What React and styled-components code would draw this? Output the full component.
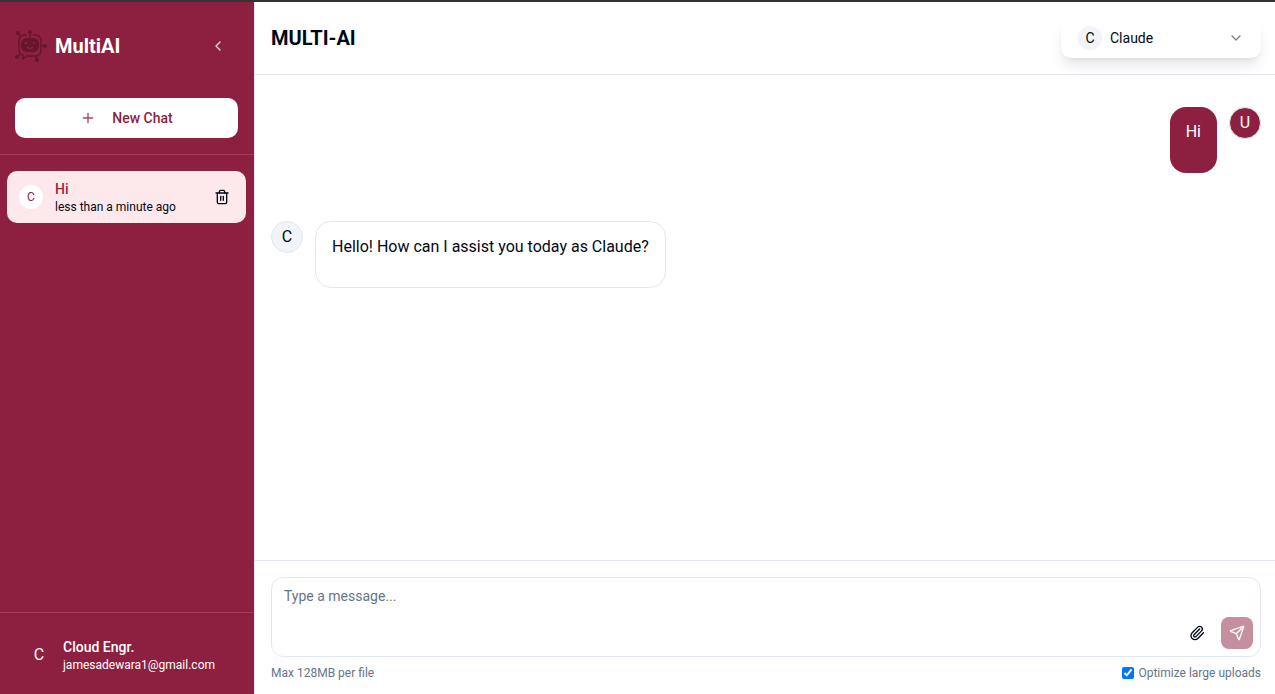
import React from 'react';
import styled, { createGlobalStyle } from 'styled-components';
import { ChevronDown, ChevronLeft, Paperclip, Plus, Send, Trash2 } from 'lucide-react';

const BRAND = '#8d1f40';
const LINE = '#e2e8f0';
const INK = '#020817';
const MUTED = '#64748b';

const GlobalStyle = createGlobalStyle`
  *, *::before, *::after { box-sizing: border-box; }
  body {
    margin: 0;
    color: ${INK};
    background: #fff;
    font: 16px/24px Roboto, sans-serif;
  }
  button, select, textarea, input { font: inherit; color: inherit; }
  h1, h2, p, ul { margin: 0; padding: 0; }
`;

const Page = styled.div`
  display: flex;
  min-height: 100vh;
  border-top: 2px solid #343338;
`;

const Sidebar = styled.aside`
  display: flex;
  flex-direction: column;
  flex: none;
  width: 255px;
  color: #fff;
  background: ${BRAND};
  border-right: 1px solid ${LINE};
`;

const SidebarTop = styled.div`
  display: flex;
  flex-direction: column;
  gap: 24px;
  padding: 16px 16px 16px 15px;
  border-bottom: 1px solid #a63c5a;
`;

const BrandRow = styled.div`
  display: flex;
  align-items: center;
  gap: 8px;
  height: 56px;
`;

const BrandName = styled.h1`
  flex: 1;
  font-size: 20px;
  line-height: 28px;
  font-weight: 700;
`;

const IconButton = styled.button`
  display: grid;
  place-items: center;
  width: ${(p) => p.$size}px;
  height: ${(p) => p.$size}px;
  padding: 0;
  border: 0;
  border-radius: 8px;
  color: ${(p) => p.$color || 'inherit'};
  background: ${(p) => p.$fill || 'transparent'};
`;

const NewChatButton = styled.button`
  display: flex;
  align-items: center;
  justify-content: center;
  gap: 16px;
  height: 40px;
  padding: 0 16px;
  border: 0;
  border-radius: 10px;
  background: #fff;
  color: ${BRAND};
  font-size: 14px;
  line-height: 20px;
  font-weight: 500;

  svg { opacity: 0.8; }
`;

const ChatList = styled.ul`
  flex: 1;
  padding: 16px 8px 16px 7px;
  list-style: none;
`;

const ChatItem = styled.li`
  display: flex;
  align-items: center;
  gap: 12px;
  height: 52px;
  padding: 0 12px;
  border-radius: 10px;
  color: ${INK};
  background: #fde8ec;
`;

const Avatar = styled.span`
  display: grid;
  place-items: center;
  flex: none;
  width: ${(p) => p.$size}px;
  height: ${(p) => p.$size}px;
  border: ${(p) => (p.$ring ? `1px solid ${LINE}` : '0')};
  border-radius: 50%;
  font-size: ${(p) => p.$text || 16}px;
  color: ${(p) => p.$color || INK};
  background: ${(p) => p.$fill};
`;

const TwoLines = styled.div`
  flex: 1;
  min-width: 0;
`;

const Title = styled.p`
  font-size: 14px;
  line-height: 20px;
  font-weight: 500;
  color: ${(p) => p.$color};
`;

const Detail = styled.p`
  font-size: 12px;
  line-height: 16px;
`;

const Account = styled.footer`
  display: flex;
  align-items: center;
  gap: 8px;
  height: 82px;
  padding: 2px 16px 0 23px;
  border-top: 1px solid #a63c5a;
`;

const Main = styled.main`
  display: flex;
  flex-direction: column;
  flex: 1;
  min-width: 0;
`;

const Header = styled.header`
  display: flex;
  align-items: center;
  justify-content: space-between;
  padding: 16px 14px 16px 16px;
  border-bottom: 1px solid ${LINE};
`;

const Heading = styled.h2`
  font-size: 20px;
  line-height: 28px;
  font-weight: 700;
`;

const ModelPicker = styled.label`
  display: flex;
  align-items: center;
  gap: 8px;
  width: 200px;
  height: 40px;
  padding: 0 17px;
  border-radius: 10px;
  background: #fff;
  box-shadow: 0 10px 15px -3px rgb(0 0 0 / 0.1), 0 4px 6px -4px rgb(0 0 0 / 0.1);

  svg { opacity: 0.5; }
`;

const ModelSelect = styled.select`
  appearance: none;
  flex: 1;
  min-width: 0;
  padding: 0;
  border: 0;
  background: transparent;
  font-size: 14px;
  line-height: 20px;
`;

const Thread = styled.section`
  display: flex;
  flex-direction: column;
  flex: 1;
  gap: 48px;
  padding: 32px 14px 32px 16px;
`;

const Message = styled.article`
  display: flex;
  align-items: flex-start;
  flex-direction: ${(p) => (p.$own ? 'row-reverse' : 'row')};
  gap: 12px;
`;

const Bubble = styled.div`
  min-height: 66px;
  padding: 13px 16px 28px;
  border: ${(p) => (p.$own ? '0' : `1px solid ${LINE}`)};
  border-radius: 16px;
  color: ${(p) => (p.$own ? '#fff' : INK)};
  background: ${(p) => (p.$own ? BRAND : '#fff')};
`;

const Composer = styled.form`
  padding: 16px 14px 13px 16px;
  border-top: 1px solid ${LINE};
`;

const InputBox = styled.div`
  display: flex;
  align-items: flex-end;
  gap: 8px;
  height: 80px;
  padding: 7px;
  border: 1px solid ${LINE};
  border-radius: 12px;
`;

const MessageInput = styled.textarea`
  flex: 1;
  align-self: stretch;
  min-width: 0;
  padding: 1px 5px;
  border: 0;
  outline: 0;
  resize: none;
  background: transparent;
  font-size: 14px;
  line-height: 20px;

  &::placeholder { color: ${MUTED}; opacity: 1; }
`;

const Notes = styled.div`
  display: flex;
  justify-content: space-between;
  margin-top: 8px;
  font-size: 12px;
  line-height: 16px;
  color: ${MUTED};
`;

const CheckLabel = styled.label`
  display: flex;
  align-items: center;
  gap: 4px;

  input { width: 12px; height: 12px; margin: 0; }
`;

function BotLogo() {
  return (
    <svg width="32" height="32" viewBox="0 0 32 32" fill="none" stroke="#651629" strokeWidth="1.4" aria-hidden="true">
      <path d="M12 5H10Q4 5 4 11V20Q4 25 8 25V29L12 26H20Q26 26 26 20V11Q26 5 20 5H18M15 3V8M3 3L6 7M26 16H29M20 26L22 29M5 24L2 27" />
      <rect x="6" y="8" width="18" height="14" rx="6" fill="#651629" stroke="none" />
      <g fill="#651629" stroke="none">
        <circle cx="3" cy="3" r="2" />
        <circle cx="15" cy="2" r="2" />
        <circle cx="30" cy="16" r="2" />
        <circle cx="22" cy="30" r="2" />
        <circle cx="2" cy="27" r="2" />
      </g>
      <circle cx="11" cy="13" r="1.3" fill={BRAND} stroke="none" />
      <circle cx="19" cy="13" r="1.3" fill={BRAND} stroke="none" />
      <path d="M12 17Q15 20 18 17" stroke={BRAND} />
    </svg>
  );
}

export default function App() {
  return (
    <>
      <GlobalStyle />
      <Page>
        <Sidebar>
          <SidebarTop>
            <BrandRow>
              <BotLogo />
              <BrandName>MultiAI</BrandName>
              <IconButton type="button" $size={40} $color="#ecd5dc" aria-label="Collapse sidebar">
                <ChevronLeft size={16} />
              </IconButton>
            </BrandRow>
            <NewChatButton type="button">
              <Plus size={16} />
              New Chat
            </NewChatButton>
          </SidebarTop>
          <ChatList>
            <ChatItem>
              <Avatar $size={24} $text={12} $fill="#fff" $color={BRAND}>C</Avatar>
              <TwoLines>
                <Title $color="#a01c40">Hi</Title>
                <Detail>less than a minute ago</Detail>
              </TwoLines>
              <IconButton type="button" $size={24} aria-label="Delete chat">
                <Trash2 size={16} />
              </IconButton>
            </ChatItem>
          </ChatList>
          <Account>
            <Avatar $size={32} $color="#fff">C</Avatar>
            <TwoLines>
              <Title>Cloud Engr.</Title>
              <Detail>jamesadewara1@gmail.com</Detail>
            </TwoLines>
          </Account>
        </Sidebar>
        <Main>
          <Header>
            <Heading>MULTI-AI</Heading>
            <ModelPicker>
              <Avatar $size={24} $text={14} $fill="#f1f5f9">C</Avatar>
              <ModelSelect aria-label="Model" defaultValue="Claude">
                <option>Claude</option>
              </ModelSelect>
              <ChevronDown size={16} />
            </ModelPicker>
          </Header>
          <Thread>
            <Message $own>
              <Avatar $size={32} $ring $color="#fff" $fill={BRAND}>U</Avatar>
              <Bubble $own>Hi</Bubble>
            </Message>
            <Message>
              <Avatar $size={32} $ring $fill="#f1f5f9">C</Avatar>
              <Bubble>Hello! How can I assist you today as Claude?</Bubble>
            </Message>
          </Thread>
          <Composer>
            <InputBox>
              <MessageInput aria-label="Message" placeholder="Type a message..." />
              <IconButton type="button" $size={32} aria-label="Attach file">
                <Paperclip size={16} />
              </IconButton>
              <IconButton type="button" $size={32} $fill="#c68f9f" $color="#fff" aria-label="Send">
                <Send size={16} />
              </IconButton>
            </InputBox>
            <Notes>
              <span>Max 128MB per file</span>
              <CheckLabel>
                <input type="checkbox" defaultChecked />
                Optimize large uploads
              </CheckLabel>
            </Notes>
          </Composer>
        </Main>
      </Page>
    </>
  );
}
